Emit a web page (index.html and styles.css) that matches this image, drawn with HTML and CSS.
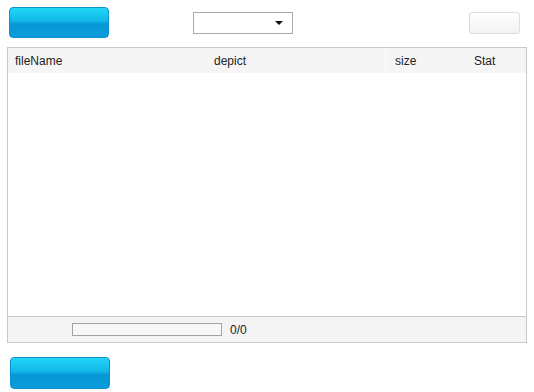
FILE: index.html
```html
<!DOCTYPE html>
<html lang="en">
<head>
    <meta charset="UTF-8">
    <title>Upload</title>
    <link rel="stylesheet" href="styles.css">
</head>
<body>
    <div class="toolbar">
        <button class="btn-blue"></button>
        <div class="select-box"><span class="arrow"></span></div>
        <button class="btn-light"></button>
    </div>
    <div class="grid">
        <div class="grid-head">
            <div class="col col-name">fileName</div>
            <div class="col col-depict">depict</div>
            <div class="col col-size">size</div>
            <div class="col col-stat">Stat</div>
        </div>
        <div class="grid-body"></div>
        <div class="grid-foot">
            <div class="progress"></div>
            <span class="count">0/0</span>
        </div>
    </div>
    <button class="btn-blue btn-bottom"></button>
</body>
</html>
```
FILE: styles.css
```css
body {
    margin: 0;
    font-family: 'Liberation Sans', Arial, sans-serif;
    font-size: 12px;
    color: #222;
    background: #fff;
}
.toolbar {
    display: flex;
    align-items: center;
    height: 31px;
    padding: 7px 14px 0 9px;
}
.btn-blue {
    width: 100px;
    height: 31px;
    padding: 0;
    border: 1px solid #0b93cf;
    border-radius: 4px;
    background: linear-gradient(#20d6f6 0%, #12b6e8 45%, #0897d6 55%, #0a9cda 100%);
    cursor: pointer;
}
.select-box {
    position: relative;
    box-sizing: border-box;
    width: 100px;
    height: 22px;
    margin-left: 84px;
    border: 1px solid #aaa;
    background: #fff;
}
.select-box .arrow {
    position: absolute;
    right: 9px;
    top: 8px;
    border-left: 4px solid transparent;
    border-right: 4px solid transparent;
    border-top: 4px solid #111;
}
.btn-light {
    width: 51px;
    height: 22px;
    margin-left: auto;
    padding: 0;
    border: 1px solid #ddd;
    border-radius: 3px;
    background: linear-gradient(#ffffff, #f2f2f2);
}
.grid {
    width: 518px;
    margin: 9px 0 0 7px;
    border: 1px solid #c9c9c9;
}
.grid-head {
    display: flex;
    height: 25px;
    background: #f5f5f5;
}
.col {
    box-sizing: border-box;
    padding: 1px 0 0 7px;
    line-height: 24px;
}
.col-name { width: 199px; }
.col-depict { width: 178px; }
.col-size {
    width: 80px;
    padding-left: 9px;
    border-left: 1px solid #fbfbfb;
}
.col-stat {
    flex: 1;
    padding-left: 9px;
}
.grid-body {
    height: 243px;
    background: #fff;
}
.grid-foot {
    display: flex;
    align-items: center;
    height: 25px;
    padding-left: 64px;
    border-top: 1px solid #c9c9c9;
    background: #f4f4f4;
}
.progress {
    box-sizing: border-box;
    width: 150px;
    height: 13px;
    border: 1px solid #a3a3a3;
    background: #f7f7f7;
}
.count {
    margin-left: 8px;
    padding-top: 1px;
}
.btn-bottom {
    display: block;
    height: 32px;
    margin: 14px 0 0 10px;
}
```
